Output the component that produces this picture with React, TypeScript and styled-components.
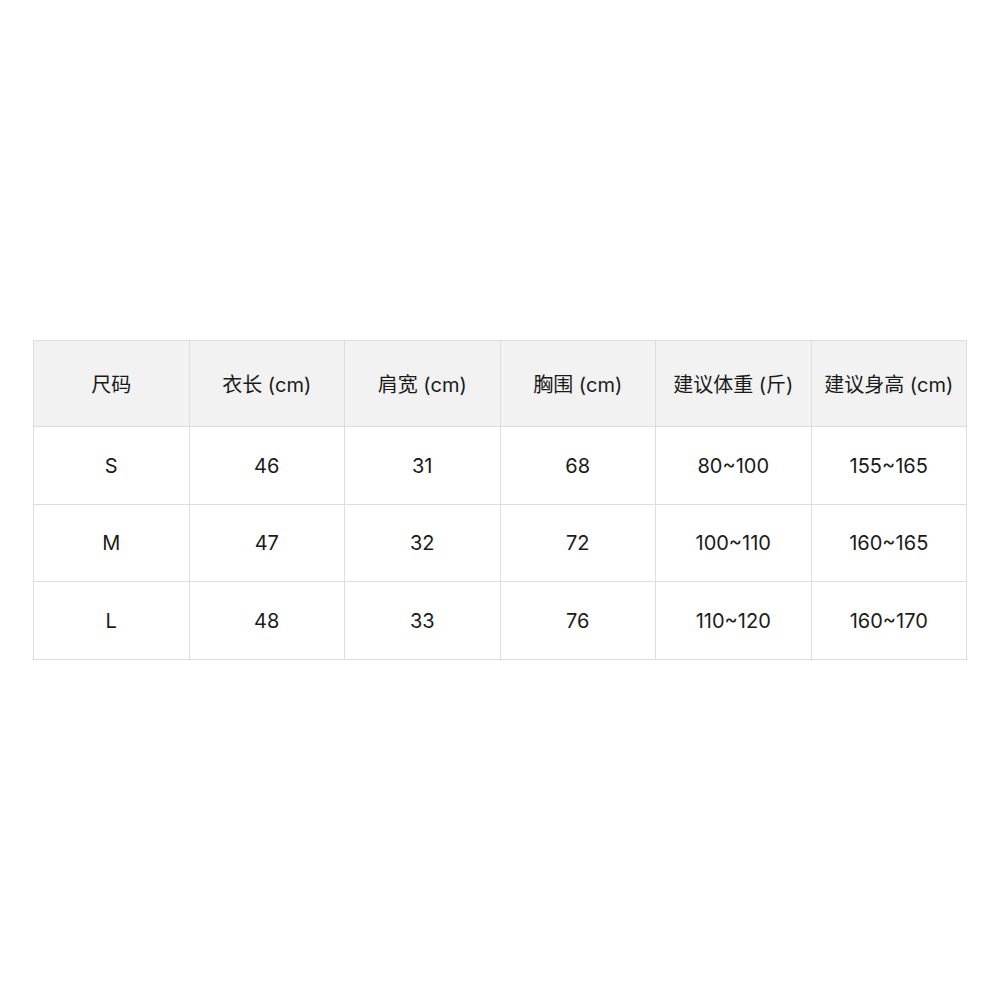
import React from 'react';
import styled, { createGlobalStyle } from 'styled-components';

const GlobalStyle = createGlobalStyle`
  html, body {
    margin: 0;
    padding: 0;
    background: #ffffff;
  }
  body {
    font-family: Inter, "Noto Sans CJK SC", sans-serif;
    color: #1a1a1a;
  }
`;

interface SizeRow {
  size: string;
  length: string;
  shoulder: string;
  chest: string;
  weight: string;
  height: string;
}

const headers = ['尺码', '衣长 (cm)', '肩宽 (cm)', '胸围 (cm)', '建议体重 (斤)', '建议身高 (cm)'];

const rows: SizeRow[] = [
  { size: 'S', length: '46', shoulder: '31', chest: '68', weight: '80~100', height: '155~165' },
  { size: 'M', length: '47', shoulder: '32', chest: '72', weight: '100~110', height: '160~165' },
  { size: 'L', length: '48', shoulder: '33', chest: '76', weight: '110~120', height: '160~170' },
];

const App = () => {
  return (
    <>
      <GlobalStyle />
      <Page>
        <SizeTable>
          <thead>
            <tr>
              {headers.map((h) => (
                <HeadCell key={h}>{h}</HeadCell>
              ))}
            </tr>
          </thead>
          <tbody>
            {rows.map((r) => (
              <tr key={r.size}>
                <Cell>{r.size}</Cell>
                <Cell>{r.length}</Cell>
                <Cell>{r.shoulder}</Cell>
                <Cell>{r.chest}</Cell>
                <Cell>{r.weight}</Cell>
                <Cell>{r.height}</Cell>
              </tr>
            ))}
          </tbody>
        </SizeTable>
      </Page>
    </>
  );
};

const Page = styled.div`
  width: 1000px;
  height: 1000px;
  display: flex;
  align-items: center;
  justify-content: center;
  box-sizing: border-box;
  padding: 0 33px;
`;

const SizeTable = styled.table`
  width: 934px;
  border-collapse: collapse;
  table-layout: fixed;
`;

const HeadCell = styled.th`
  height: 85px;
  padding: 0;
  background: #f2f2f2;
  border: 1px solid #dddddd;
  font-size: 20px;
  font-weight: 400;
  text-align: center;
  vertical-align: middle;
  color: #1a1a1a;
  white-space: nowrap;
`;

const Cell = styled.td`
  height: 76.5px;
  padding: 0;
  border: 1px solid #dddddd;
  font-size: 20px;
  text-align: center;
  vertical-align: middle;
  color: #1a1a1a;
`;

export default App;
